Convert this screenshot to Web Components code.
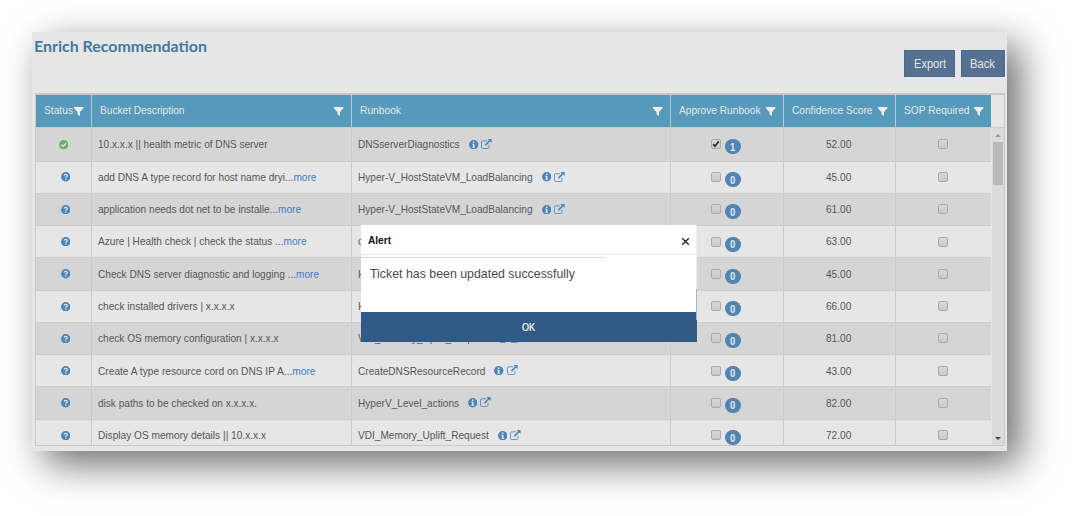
<!DOCTYPE html>
<html lang="en">
<head>
<meta charset="utf-8">
<title>Enrich Recommendation</title>
<style>
    html, body {
        margin: 0;
        height: 100%;
        overflow: hidden;
        background: #fff;
        font-family: "Liberation Sans", Arial, sans-serif;
    }
</style>
</head>
<body>
<enrich-page></enrich-page>

<script>
// text drawn narrower than its font: fit="px" for a width, ratio="n" for a factor
class TightText extends HTMLElement {
    constructor() {
        super();
        this.attachShadow({ mode: 'open' });
        this.shadowRoot.innerHTML = `
            <style>
                :host {
                    display: inline-block;
                    flex: none;
                    white-space: nowrap;
                    transform-origin: 0 50%;
                }
            </style>
            <slot></slot>
        `;
    }

    connectedCallback() {
        const width = this.getBoundingClientRect().width;
        const fit = parseFloat(this.getAttribute('fit'));
        const ratio = fit ? fit / width : parseFloat(this.getAttribute('ratio') || 0.871);
        this.style.transform = `scaleX(${ratio})`;
        this.style.marginRight = `${width * (ratio - 1)}px`;
    }
}

const icons = {
    filter: '<path d="M0 0H10V1.2L6.4 5.2V9.6L3.7 7.6V5.2L0 1.2Z"/>',
    check: '<circle cx="5" cy="5" r="5"/><path d="M2.5 5.1L4.3 6.8L7.6 3.5" fill="none" stroke="var(--hole)" stroke-width="1.5"/>',
    question: '<circle cx="5" cy="5" r="5"/><path d="M3.3 3.8C3.5 2 6.7 2 6.7 3.9C6.7 5 5.1 5 5.1 6.1" fill="none" stroke="var(--hole)" stroke-width="1.4"/><rect x="4.4" y="6.9" width="1.4" height="1.3" fill="var(--hole)"/>',
    info: '<circle cx="5" cy="5" r="5"/><path d="M4.2 1.7H5.8V3.1H4.2ZM3.5 4H5.8V7.1H6.5V8.2H3.5V7.1H4.2V5.1H3.5Z" fill="var(--hole)"/>',
    external: '<path d="M6.2 1.8H1.7Q.5 1.8 .5 3V8.3Q.5 9.5 1.7 9.5H6.8Q8 9.5 8 8.3V5.8" fill="none" stroke="currentColor" opacity=".8"/><path d="M6.6 0H10.6V4L9.2 2.6L5 6.7L3.9 5.6L8 1.4Z"/>'
};

class GridIcon extends HTMLElement {
    connectedCallback() {
        const name = this.getAttribute('name');
        const width = name === 'external' ? 11 : 10;
        this.attachShadow({ mode: 'open' });
        this.shadowRoot.innerHTML = `
            <style>
                :host { display: block; flex: none; color: #4a84b9; --hole: #e4e4e4; }
                :host([name=filter]) { color: #eee; }
                :host([name=check]) { color: #62b267; }
                svg { display: block; fill: currentColor; }
            </style>
            <svg width="${name === 'external' ? 11 : 9.4}" height="${name === 'external' ? 10 : 9.4}" viewBox="0 0 ${width} 10">${icons[name]}</svg>
        `;
    }
}

class GridCheckbox extends HTMLElement {
    constructor() {
        super();
        this.attachShadow({ mode: 'open' });
        this.shadowRoot.innerHTML = `
            <style>
                :host {
                    display: block;
                    flex: none;
                    box-sizing: border-box;
                    width: 10px;
                    height: 10px;
                    border: 1px solid #aaa;
                    border-radius: 2px;
                    background: linear-gradient(#d8d8d8, #cacaca);
                }
                svg { display: none; width: 8px; height: 8px; }
                :host([checked]) svg { display: block; }
            </style>
            <svg viewBox="0 0 8 8"><path d="M1.2 4.2L3 6.2L6.7 1.4" fill="none" stroke="#333" stroke-width="1.8"/></svg>
        `;
    }
}

class ActionButton extends HTMLElement {
    constructor() {
        super();
        this.attachShadow({ mode: 'open' });
        this.shadowRoot.innerHTML = `
            <style>
                :host {
                    display: flex;
                    align-items: center;
                    justify-content: center;
                    box-sizing: border-box;
                    height: 27px;
                    border: 1px solid #4c6a8f;
                    background: #557192;
                    color: #e6e6e6;
                    font-size: 12px;
                }
            </style>
            <slot></slot>
        `;
    }
}

class HeaderCell extends HTMLElement {
    constructor() {
        super();
        this.attachShadow({ mode: 'open' });
        this.shadowRoot.innerHTML = `
            <style>
                :host {
                    display: flex;
                    align-items: center;
                    justify-content: space-between;
                    box-sizing: border-box;
                    padding: 0 7.5px 0 7.5px;
                    border-right: 1px solid #b5c6cf;
                    background: #5599bb;
                    color: #e6e6e6;
                    font-size: 11.6px;
                }
                :host(:last-of-type) { border-right: none; }
                .label { margin-bottom: 4px; }
                grid-icon { margin-top: 1px; }
            </style>
            <span class="label"><slot></slot></span>
            <grid-icon name="filter"></grid-icon>
        `;
    }
}

class GridRow extends HTMLElement {
    set data(row) {
        const more = row.more ? '<a>more</a>' : '';
        this.attachShadow({ mode: 'open' });
        this.shadowRoot.innerHTML = `
            <style>
                :host {
                    display: grid;
                    grid-template-columns: var(--columns);
                    flex: none;
                    box-sizing: border-box;
                    height: 32.27px;
                    border-bottom: 1px solid #cdcdcd;
                    background: #e6e6e6;
                    color: #555;
                    font-size: 11.6px;
                }
                :host(:nth-child(odd)) { background: #d5d5d5; }
                :host(:first-child) { height: 33.5px; }
                .cell {
                    display: flex;
                    align-items: center;
                    box-sizing: border-box;
                    padding-left: 6px;
                    border-right: 1px solid #cbcbcb;
                }
                .cell:last-child { border-right: none; }
                .center { justify-content: center; padding: 0 2px 0 0; }
                .status { padding: 0 0 0 4px; }
                :host(:first-child) .status { padding: 0; }
                .cell > tight-text { margin-bottom: 1.4px; }
                a { color: #3d7cc4; }
                .info { margin-left: 9px; }
                .external { margin: -1px 0 0 3px; }
                .badge {
                    display: flex;
                    align-items: center;
                    justify-content: center;
                    width: 16.5px;
                    height: 15px;
                    margin: 5px 0 0 4px;
                    border-radius: 8px;
                    background: #4f84b5;
                    color: #e6e6e6;
                    font-size: 10.5px;
                    font-weight: bold;
                }
            </style>
            <div class="cell center status"><grid-icon name="${row.done ? 'check' : 'question'}"></grid-icon></div>
            <div class="cell"><tight-text fit="${row.fit}">${row.text}${more}</tight-text></div>
            <div class="cell">
                <tight-text>${row.runbook}</tight-text>
                <grid-icon class="info" name="info"></grid-icon>
                <grid-icon class="external" name="external"></grid-icon>
            </div>
            <div class="cell center">
                <grid-checkbox ${row.done ? 'checked' : ''}></grid-checkbox>
                <span class="badge"><tight-text ratio="0.9">${row.done ? 1 : 0}</tight-text></span>
            </div>
            <div class="cell center"><tight-text>${row.score}</tight-text></div>
            <div class="cell center"><grid-checkbox></grid-checkbox></div>
        `;
    }
}

class GridScrollbar extends HTMLElement {
    constructor() {
        super();
        this.attachShadow({ mode: 'open' });
        this.shadowRoot.innerHTML = `
            <style>
                :host {
                    display: flex;
                    flex-direction: column;
                    align-items: center;
                    box-sizing: border-box;
                    width: 12px;
                    padding: 6px 0 5px;
                    background: #dbdbdb;
                }
                .arrow { border: 3px solid transparent; border-top: none; border-bottom-color: #999; }
                .down { border-bottom: none; border-top: 3px solid #444; margin-top: auto; }
                .thumb { width: 10px; height: 43px; margin-top: 5px; background: #b9b9b9; }
            </style>
            <div class="arrow"></div>
            <div class="thumb"></div>
            <div class="arrow down"></div>
        `;
    }
}

class AlertDialog extends HTMLElement {
    constructor() {
        super();
        this.attachShadow({ mode: 'open' });
        this.shadowRoot.innerHTML = `
            <style>
                :host {
                    display: flex;
                    flex-direction: column;
                    width: 335px;
                    height: 117px;
                    background: #fff;
                    border-right: 1px solid #eee;
                }
                header {
                    display: flex;
                    align-items: center;
                    justify-content: space-between;
                    box-sizing: border-box;
                    height: 30px;
                    padding: 0 6px 0 7px;
                    border-bottom: 1px solid #e6e6e6;
                    color: #111;
                    font-size: 10.5px;
                    font-weight: bold;
                }
                header svg { margin-top: 3px; }
                hr {
                    width: 244px;
                    margin: 2px 0 0;
                    border: none;
                    border-top: 1px solid #d8d8d8;
                }
                .message {
                    flex: 1;
                    padding: 8px 9px 0;
                    color: #4a4a4a;
                    font-size: 13.2px;
                }
                .ok {
                    display: flex;
                    align-items: center;
                    justify-content: center;
                    height: 30px;
                    margin-right: -1px;
                    background: #315a86;
                    color: #fff;
                    font-size: 10px;
                    -webkit-text-stroke: 0.2px #fff;
                }
            </style>
            <header>
                <tight-text fit="23">Alert</tight-text>
                <svg width="9" height="9" viewBox="0 0 9 9"><path d="M1.2 1.2L7.8 7.8M7.8 1.2L1.2 7.8" stroke="#222" stroke-width="1.3"/></svg>
            </header>
            <hr>
            <div class="message"><slot></slot></div>
            <div class="ok"><tight-text fit="13">OK</tight-text></div>
        `;
    }
}

const rows = [
    { done: true, text: '10.x.x.x || health metric of DNS server', fit: 169.5, runbook: 'DNSserverDiagnostics', score: '52.00' },
    { text: 'add DNS A type record for host name dryi...', more: true, fit: 218.5, runbook: 'Hyper-V_HostStateVM_LoadBalancing', score: '45.00' },
    { text: 'application needs dot net to be installe...', more: true, fit: 203, runbook: 'Hyper-V_HostStateVM_LoadBalancing', score: '61.00' },
    { text: 'Azure | Health check | check the status ...', more: true, fit: 208.5, runbook: 'c', score: '63.00' },
    { text: 'Check DNS server diagnostic and logging ...', more: true, fit: 221, runbook: 'H', score: '45.00' },
    { text: 'check installed drivers | x.x.x.x', fit: 136.5, runbook: 'H', score: '66.00' },
    { text: 'check OS memory configuration | x.x.x.x', fit: 180.5, runbook: 'VDI_Memory_Uplift_Request', score: '81.00' },
    { text: 'Create A type resource cord on DNS IP A...', more: true, fit: 217.5, runbook: 'CreateDNSResourceRecord', score: '43.00' },
    { text: 'disk paths to be checked on x.x.x.x.', fit: 159, runbook: 'HyperV_Level_actions', score: '82.00' },
    { text: 'Display OS memory details || 10.x.x.x', fit: 168, runbook: 'VDI_Memory_Uplift_Request', score: '72.00' }
];

class EnrichPage extends HTMLElement {
    constructor() {
        super();
        this.attachShadow({ mode: 'open' });
        this.shadowRoot.innerHTML = `
            <style>
                :host {
                    display: block;
                    position: relative;
                    box-sizing: border-box;
                    width: 975px;
                    height: 419px;
                    margin: 32px;
                    padding: 0 2px 0 3px;
                    background: #e6e6e6;
                    box-shadow: 13px 13px 36px rgba(0, 0, 0, 0.58);
                    --columns: 56px 260px 319px 113px 112px 95px;
                }
                .top {
                    display: flex;
                    justify-content: space-between;
                    height: 61px;
                }
                h1 {
                    margin: 4px 0 0 -1px;
                    color: #427a9d;
                    font: bold 15.5px/20px Lato, sans-serif;
                }
                .actions {
                    display: flex;
                    gap: 6px;
                    margin-top: 18px;
                }
                .export { width: 51px; }
                .back { width: 44px; }
                .table {
                    box-sizing: border-box;
                    height: 353px;
                    border: 1px solid #c9c9c9;
                    border-top-width: 2px;
                }
                .head {
                    display: grid;
                    grid-template-columns: var(--columns);
                    height: 32px;
                    border-bottom: 1px solid #cdcdcd;
                }
                .body {
                    display: flex;
                    justify-content: space-between;
                    height: 317px;
                    overflow: hidden;
                }
                .rows { display: flex; flex-direction: column; }
                .sliver {
                    position: absolute;
                    left: 664px;
                    top: 257px;
                    width: 1px;
                    height: 31px;
                    background: #a3b5cb;
                }
                alert-dialog { position: absolute; left: 329px; top: 193px; }
            </style>
            <div class="top">
                <h1><tight-text fit="173">Enrich Recommendation</tight-text></h1>
                <div class="actions">
                    <action-button class="export"><tight-text fit="32">Export</tight-text></action-button>
                    <action-button class="back"><tight-text fit="25">Back</tight-text></action-button>
                </div>
            </div>
            <div class="table">
                <div class="head">
                    <header-cell><tight-text fit="29">Status</tight-text></header-cell>
                    <header-cell><tight-text fit="84.5">Bucket Description</tight-text></header-cell>
                    <header-cell><tight-text fit="41">Runbook</tight-text></header-cell>
                    <header-cell><tight-text fit="81.5">Approve Runbook</tight-text></header-cell>
                    <header-cell><tight-text fit="80.5">Confidence Score</tight-text></header-cell>
                    <header-cell><tight-text fit="65.5">SOP Required</tight-text></header-cell>
                </div>
                <div class="body">
                    <div class="rows"></div>
                    <grid-scrollbar></grid-scrollbar>
                </div>
            </div>
            <alert-dialog><tight-text fit="205">Ticket has been updated successfully</tight-text></alert-dialog>
            <div class="sliver"></div>
        `;

        const list = this.shadowRoot.querySelector('.rows');
        rows.forEach(row => {
            const el = document.createElement('grid-row');
            el.data = row;
            list.appendChild(el);
        });
    }
}

window.customElements.define('tight-text', TightText);
window.customElements.define('grid-icon', GridIcon);
window.customElements.define('grid-checkbox', GridCheckbox);
window.customElements.define('action-button', ActionButton);
window.customElements.define('header-cell', HeaderCell);
window.customElements.define('grid-row', GridRow);
window.customElements.define('grid-scrollbar', GridScrollbar);
window.customElements.define('alert-dialog', AlertDialog);
window.customElements.define('enrich-page', EnrichPage);
</script>
</body>
</html>
